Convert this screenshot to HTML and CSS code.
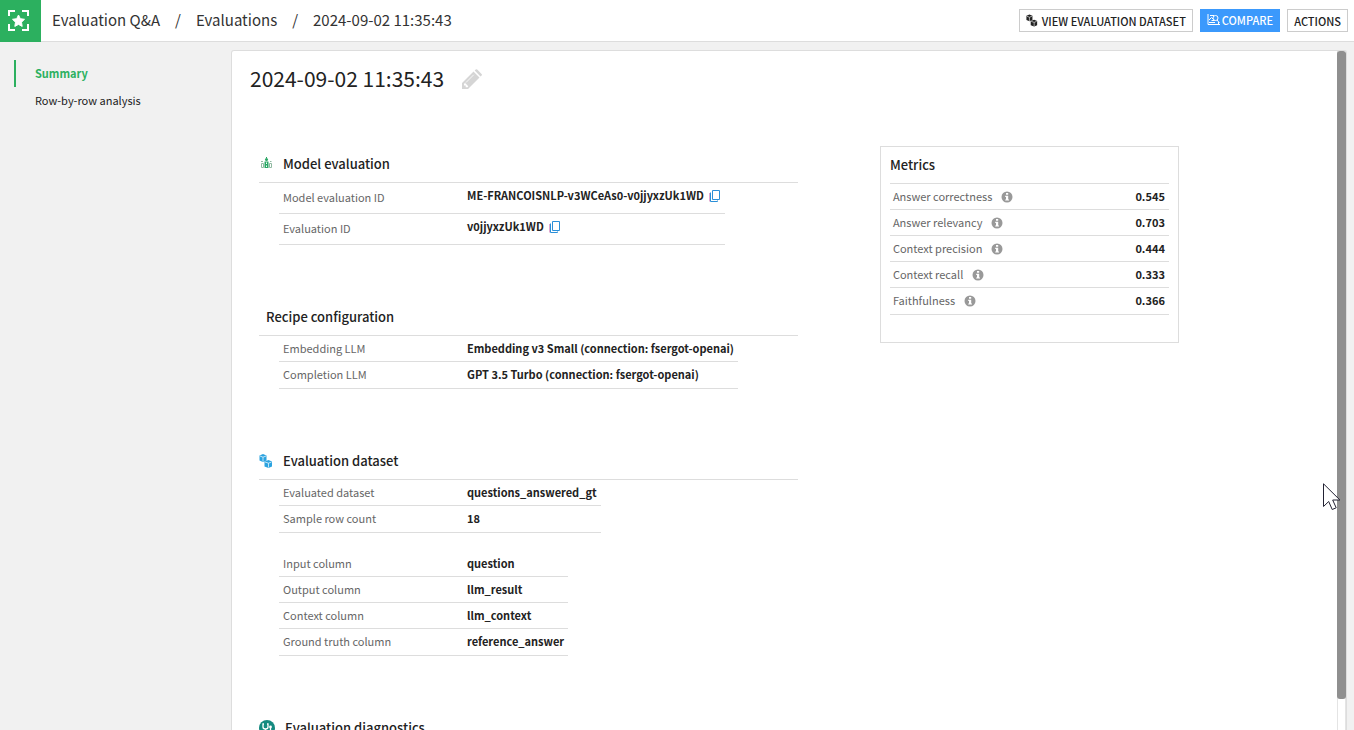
FILE: index.html
```html
<!DOCTYPE html>
<html lang="en">
<head>
  <meta charset="UTF-8">
  <meta name="viewport" content="width=device-width, initial-scale=1.0">
  <title>Evaluation Q&amp;A</title>
  <link rel="stylesheet" href="styles.css">
</head>
<body>
  <!-- Shared icons -->
  <svg class="sprite" aria-hidden="true">
    <symbol id="cubes" viewBox="0 0 14 14">
      <path fill="currentColor" d="M.5 1.500 4 0l3.500 1.500v5L4 8 .5 6.500ZM5.500 7.500 9.500 6 13 7.500v5L9.500 14l-4-1.500Z"/>
      <path fill="none" stroke="#fff" stroke-width=".7" d="M1 2 4 3.200 7 2M4 3.200v4.300M6 8l3.500 1.200L12.500 8M9.500 9.200v4.300"/>
    </symbol>
    <symbol id="info" viewBox="0 0 12 12">
      <circle cx="6" cy="6" r="5.500" fill="#999"/>
      <path fill="#fff" d="M5 2h2.200v1.700H5zM4.200 4.700h3v3.700H8v1.200H4.200V8.400H5V5.900h-.8z"/>
    </symbol>
    <symbol id="copy" viewBox="0 0 12 13">
      <path fill="none" stroke="#e0a9cf" d="M.5 3v8.500"/>
      <path fill="none" stroke="#2a8fd8" d="M3.500.5h7v9h-7zM1.500 2.500v9h7v-1"/>
    </symbol>
  </svg>

  <header class="topbar">
    <a class="logo" href="#" aria-label="Home">
      <svg width="23" height="23" viewBox="0 0 23 23">
        <path fill="none" stroke="#fff" stroke-width="2" d="M2 7V2h6M15 2h6v5M21 15v6h-6M8 21H2v-6"/>
        <path fill="#fff" stroke="#fff" stroke-linejoin="round" d="m11.500 6 1.800 3.700 4.200.6-3 2.900.7 4.200-3.700-2-3.700 2 .7-4.200-3-2.900 4.200-.6z"/>
      </svg>
    </a>
    <nav class="breadcrumb">
      <a href="#">Evaluation Q&amp;A</a>
      <span>/</span>
      <a href="#">Evaluations</a>
      <span>/</span>
      <a href="#">2024-09-02 11:35:43</a>
    </nav>
    <div class="actions">
      <button class="btn">
        <svg class="btn-cubes" width="12" height="13"><use href="#cubes"/></svg>
        VIEW EVALUATION DATASET
      </button>
      <button class="btn btn-primary">
        <svg width="13" height="12" viewBox="0 0 13 12" fill="none" stroke="#fff">
          <path d="M1 0v10.500h12M2 6l2.500-2.500L6 5M2 8.500h6M3 1.500h4M11.500 8v2.500"/>
          <circle cx="8.500" cy="4" r="2.500"/>
          <path d="m10 6 2.500 3M4.500 6.500h3"/>
        </svg>
        COMPARE
      </button>
      <button class="btn">ACTIONS</button>
    </div>
  </header>

  <div class="page">
    <nav class="sidebar">
      <a class="active" href="#">Summary</a>
      <a href="#">Row-by-row analysis</a>
    </nav>

    <main class="card">
      <div class="content">
        <div class="title">
          <h1>2024-09-02 11:35:43</h1>
          <button class="edit" aria-label="Rename">
            <svg width="20" height="20" viewBox="0 0 20 20" fill="#d5d5d5">
              <path d="M0 20v-6L11.500 2.500l6 6L6 20zM2 14.800v1.700h1.700v1.800h1.800l.8-1-3.200-3.300z" fill-rule="evenodd"/>
              <path d="m12.700 1.600 1-1.100q.7-.7 1.500 0l4.400 4.400q.7.7 0 1.500l-1.100 1.100z"/>
              <path d="m4 13.500 7.700-7.700" stroke="#fff" stroke-width=".8"/>
            </svg>
          </button>
        </div>

        <div class="columns">
          <div class="left">
            <section>
              <h2>
                <svg width="17" height="16" viewBox="0 0 17 16">
                  <circle cx="7.500" cy="3.500" r="1.500" fill="#2aa764"/>
                  <path fill="#2aa764" d="M5.500 5.500h4V12h-4zM7 1h1v1H7z"/>
                  <path fill="none" stroke="#8fb9a0" d="M2 5.500h2M2.500 7.500h2v4h-2zM10.500 7.500h2v4h-2zM11 5.500h1.500"/>
                  <path fill="#fff" d="M7 6.500h1V8H7zM7 9.500h1V11H7z"/>
                </svg>
                <span>Model evaluation</span>
              </h2>
              <table class="props ids">
                <tr>
                  <th>Model evaluation ID</th>
                  <td>ME-FRANCOISNLP-v3WCeAs0-v0jjyxzUk1WD <button class="copy" aria-label="Copy model evaluation ID"><svg width="12" height="13"><use href="#copy"/></svg></button></td>
                </tr>
                <tr>
                  <th>Evaluation ID</th>
                  <td>v0jjyxzUk1WD <button class="copy" aria-label="Copy evaluation ID"><svg width="12" height="13"><use href="#copy"/></svg></button></td>
                </tr>
              </table>
            </section>

            <section>
              <h2><span>Recipe configuration</span></h2>
              <table class="props">
                <tr><th>Embedding LLM</th><td>Embedding v3 Small (connection: fsergot-openai)</td></tr>
                <tr><th>Completion LLM</th><td>GPT 3.5 Turbo (connection: fsergot-openai)</td></tr>
              </table>
            </section>

            <section>
              <h2>
                <svg class="blue" width="17" height="14" viewBox="0 0 17 14"><use href="#cubes" width="14" height="14"/></svg>
                <span>Evaluation dataset</span>
              </h2>
              <table class="props">
                <tr><th>Evaluated dataset</th><td>questions_answered_gt</td></tr>
                <tr><th>Sample row count</th><td>18</td></tr>
              </table>
              <table class="props">
                <tr><th>Input column</th><td>question</td></tr>
                <tr><th>Output column</th><td>llm_result</td></tr>
                <tr><th>Context column</th><td>llm_context</td></tr>
                <tr><th>Ground truth column</th><td>reference_answer</td></tr>
              </table>
            </section>

            <section>
              <h2>
                <svg width="19" height="16" viewBox="0 0 19 16">
                  <circle cx="8" cy="8" r="8" fill="#158a80"/>
                  <path fill="none" stroke="#fff" stroke-width="1.300" d="M5 4H4v3q0 2 2.500 2T9 7V4H8M6.500 9v2q0 2 2.500 2t2.500-2V8"/>
                  <circle cx="11.500" cy="7" r="1.400" fill="#fff"/>
                </svg>
                <span>Evaluation diagnostics</span>
              </h2>
            </section>
          </div>

          <section class="metrics">
            <h2>Metrics</h2>
            <table>
              <tr><th>Answer correctness <svg width="12" height="12"><use href="#info"/></svg></th><td>0.545</td></tr>
              <tr><th>Answer relevancy <svg width="12" height="12"><use href="#info"/></svg></th><td>0.703</td></tr>
              <tr><th>Context precision <svg width="12" height="12"><use href="#info"/></svg></th><td>0.444</td></tr>
              <tr><th>Context recall <svg width="12" height="12"><use href="#info"/></svg></th><td>0.333</td></tr>
              <tr><th>Faithfulness <svg width="12" height="12"><use href="#info"/></svg></th><td>0.366</td></tr>
            </table>
          </section>
        </div>
      </div>
      <div class="scrollbar"><div class="thumb"></div></div>
    </main>
  </div>

  <svg class="pointer" width="18" height="28" viewBox="0 0 18 28">
    <path fill="#fff" stroke="#223" d="M.5.800v22.700l5.200-5 3.500 8 4-1.700-3.500-7.800h7.200z"/>
  </svg>
</body>
</html>
```
FILE: styles.css
```css
* {
  margin: 0;
  padding: 0;
  box-sizing: border-box;
}

body {
  font-family: "Noto Sans CJK SC", "Open Sans", sans-serif;
  font-size: 11px;
  color: #222;
  background: #f1f1f1;
  height: 100vh;
  display: flex;
  flex-direction: column;
  overflow: hidden;
}

a {
  color: inherit;
  text-decoration: none;
}

button {
  font-family: inherit;
  cursor: pointer;
}

.sprite {
  display: none;
}

/* Top bar */
.topbar {
  display: flex;
  align-items: center;
  flex: none;
  height: 42px;
  padding-right: 6px;
  background: #fff;
  border-bottom: 1px solid #ddd;
}

.logo {
  display: flex;
  align-items: center;
  width: 41px;
  height: 42px;
  padding-left: 7px;
  padding-bottom: 2px;
  margin-bottom: -1px;
  background: #2cb05f;
}

.breadcrumb {
  display: flex;
  gap: 15px;
  margin-left: 11px;
  padding-bottom: 2px;
  font-size: 15px;
  line-height: 24px;
  color: #333;
}

.actions {
  display: flex;
  gap: 7px;
  margin-left: auto;
}

.btn {
  display: flex;
  align-items: center;
  gap: 4px;
  height: 23px;
  padding: 0 6px;
  font-size: 11px;
  font-weight: 500;
  color: #222;
  background: #fff;
  border: 1px solid #ccc;
}

.btn-primary {
  gap: 2px;
  padding-bottom: 2px;
  color: #fff;
  background: #3b99fc;
  border-color: #3b99fc;
}

/* Page */
.page {
  flex: 1;
  display: flex;
  min-height: 0;
  padding: 8px 7px 0 0;
}

.sidebar {
  flex: none;
  width: 231px;
  padding: 10px 0 0 14px;
}

.sidebar a {
  display: block;
  padding-left: 19px;
  line-height: 27px;
  border-left: 2px solid transparent;
}

.sidebar .active {
  font-weight: bold;
  color: #2cb05f;
  border-color: #2cb05f;
}

.card {
  flex: 1;
  display: flex;
  min-width: 0;
  background: #fff;
  border: 1px solid #ddd;
  border-bottom: 0;
  border-radius: 3px 3px 0 0;
  overflow: hidden;
}

.content {
  flex: 1;
  padding-left: 27px;
}

.title {
  display: flex;
  align-items: center;
  gap: 18px;
  height: 56px;
  margin-left: -9px;
}

h1 {
  padding-bottom: 2px;
  font-size: 21px;
  font-weight: normal;
}

.edit,
.copy {
  background: none;
  border: none;
}

.edit svg,
h2 svg {
  display: block;
}

.columns {
  display: flex;
  align-items: flex-start;
  margin-top: 39px;
}

.left {
  width: 50%;
}

.left section {
  margin-bottom: 54px;
}

h2 {
  display: flex;
  align-items: center;
  height: 37px;
  font-size: 13px;
  font-weight: 500;
  border-bottom: 1px solid #ddd;
}

h2 span {
  margin-left: 7px;
  padding-bottom: 2px;
}

.blue {
  color: #2ba3e0;
}

/* Tables */
table {
  border-collapse: separate;
  border-spacing: 0;
}

th,
td {
  height: 26px;
  padding-bottom: 2px;
  line-height: 16px;
  text-align: left;
  white-space: nowrap;
  border-bottom: 1px solid #ddd;
}

tr:last-child td {
  height: 27px;
}

th {
  font-weight: normal;
  color: #666;
}

td {
  font-weight: bold;
}

.props {
  margin-left: 20px;
}

.props + .props {
  margin-top: 18px;
}

.props th {
  width: 184px;
  padding-left: 4px;
}

.props td {
  padding-left: 4px;
  padding-right: 4px;
}

.ids tr td {
  height: 31px;
  padding-bottom: 6px;
}

.copy {
  margin-left: 3px;
  height: 13px;
  vertical-align: middle;
}

.copy svg {
  display: block;
}

.metrics {
  width: 299px;
  margin-left: 7.6%;
  padding: 0 9px 27px;
  border: 1px solid #ddd;
}

.metrics h2 {
  padding-bottom: 2px;
}

.metrics table {
  width: 100%;
}

.metrics th {
  padding-left: 3px;
}

.metrics th svg {
  margin-left: 6px;
  vertical-align: -2px;
}

.metrics td {
  padding-right: 4px;
  text-align: right;
}

/* Scrollbar */
.scrollbar {
  flex: none;
  width: 9px;
  border: solid #e4e4e4;
  border-width: 0 1px;
}

.thumb {
  height: 95.5%;
  margin: 0 -1px;
  background: #8f8f8f;
  border-radius: 3px;
}

.pointer {
  position: absolute;
  left: 1323px;
  top: 483px;
}
```
